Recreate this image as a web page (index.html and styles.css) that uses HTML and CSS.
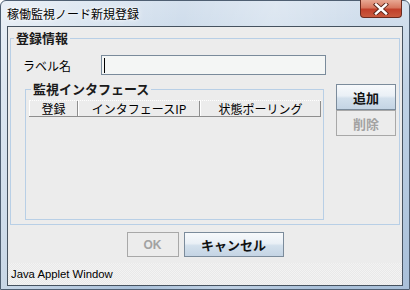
FILE: index.html
```html
<!DOCTYPE html>
<html lang="ja">
<head>
<meta charset="utf-8">
<title>稼働監視ノード新規登録</title>
<link rel="stylesheet" href="styles.css">
</head>
<body>
<div class="window">
  <div class="titlebar">
    <span class="title">稼働監視ノード新規登録</span>
    <div class="close">
      <svg width="16" height="12" viewBox="0 0 16 12">
        <path d="M3 1.5 L13 10.5 M13 1.5 L3 10.5" stroke="#5a2418" stroke-width="4.2" stroke-linecap="square"/>
        <path d="M3 1.5 L13 10.5 M13 1.5 L3 10.5" stroke="#ffffff" stroke-width="2.4" stroke-linecap="square"/>
      </svg>
    </div>
  </div>
  <div class="client">
    <fieldset class="group outer">
      <legend>登録情報</legend>
      <div class="label-row">
        <span class="label">ラベル名</span>
        <div class="textfield"><span class="caret"></span></div>
      </div>
      <div class="main-row">
        <fieldset class="group inner">
          <legend>監視インタフェース</legend>
          <div class="table-header">
            <div class="th c1">登録</div>
            <div class="th c2">インタフェースIP</div>
            <div class="th c3">状態ポーリング</div>
          </div>
        </fieldset>
        <div class="side-buttons">
          <button class="btn active">追加</button>
          <button class="btn disabled">削除</button>
        </div>
      </div>
    </fieldset>
    <div class="buttons">
      <button class="btn disabled ok">OK</button>
      <button class="btn active cancel">キャンセル</button>
    </div>
    <div class="status">Java Applet Window</div>
  </div>
</div>
</body>
</html>
```

FILE: styles.css
```css
html, body {
  margin: 0;
  padding: 0;
  width: 410px;
  height: 290px;
  overflow: hidden;
  background: #ffffff;
}

.window {
  box-sizing: border-box;
  width: 410px;
  height: 290px;
  border: 1px solid #4f5f72;
  border-radius: 6px 6px 0 0;
  background:
    linear-gradient(100deg, rgba(255,255,255,0.5) 0%, rgba(255,255,255,0) 40%, rgba(255,255,255,0.25) 60%, rgba(255,255,255,0) 80%),
    linear-gradient(180deg, #d5e1ee 0%, #c0d2e5 30%, #a9c0d9 100%);
  display: flex;
  flex-direction: column;
  font-family: "Noto Sans CJK JP", sans-serif;
}

.titlebar {
  height: 25px;
  flex: none;
  display: flex;
  justify-content: space-between;
  align-items: flex-start;
  padding-left: 6px;
}

.title {
  font-size: 12px;
  line-height: 25px;
  color: #000;
  text-shadow: 0 0 6px #ffffff, 0 0 3px #ffffff;
}

.close {
  width: 42px;
  height: 18px;
  margin-top: -1px;
  margin-right: 7px;
  box-sizing: border-box;
  border: 1px solid #6b2a1e;
  border-top: none;
  border-radius: 0 0 4px 4px;
  background: linear-gradient(180deg, #e8a893 0%, #d7775f 45%, #c1402a 55%, #c95a3e 100%);
  display: flex;
  align-items: center;
  justify-content: center;
}

.client {
  flex: 1;
  margin: 0 6px 3px 6px;
  border: 1px solid #46525f;
  background: #ececec;
  display: flex;
  flex-direction: column;
}

.group {
  margin: 0;
  padding: 0;
  border: 1px solid #b8cfe6;
  min-width: 0;
}

.group legend {
  padding: 0 2px;
  font-size: 13px;
  line-height: 14px;
  font-weight: bold;
  color: #1a1a1a;
}

.outer {
  box-sizing: border-box;
  width: 390px;
  height: 194px;
  margin: 4px 0 0 2px;
}

.outer > legend {
  margin-left: 3px;
}

.label-row {
  display: flex;
  align-items: center;
  margin: 10px 0 0 12px;
  height: 20px;
}

.label {
  width: 78px;
  font-size: 12px;
  color: #000;
}

.textfield {
  box-sizing: border-box;
  width: 225px;
  height: 20px;
  border: 1px solid #7a8b9b;
  background: #f4f6f5;
  display: flex;
  align-items: center;
  padding-left: 2px;
}

.caret {
  width: 1px;
  height: 15px;
  background: #000;
}

.main-row {
  display: flex;
  align-items: flex-start;
  margin-top: 7px;
  padding-left: 14px;
}

.inner {
  box-sizing: border-box;
  width: 299px;
  height: 138px;
  padding: 4px 2px 0 3px;
}

.inner > legend {
  margin-left: 2px;
}

.table-header {
  display: flex;
  height: 17px;
  box-sizing: border-box;
  border-top: 1px dotted #ffffff;
  border-bottom: 1px solid #8e8e8e;
  background: #ececec;
}

.th {
  box-sizing: border-box;
  border-left: 1px solid #ffffff;
  border-right: 1px solid #8e8e8e;
  font-size: 12px;
  line-height: 15px;
  text-align: center;
  color: #000;
}

.c1 { width: 49px; }
.c2 { width: 122px; }
.c3 { flex: 1; }

.side-buttons {
  display: flex;
  flex-direction: column;
  margin: 2px 0 0 12px;
}

.btn {
  box-sizing: border-box;
  width: 60px;
  height: 26px;
  margin: 0;
  padding: 0;
  font-family: "Noto Sans CJK JP", sans-serif;
  font-size: 13px;
  font-weight: bold;
  border-radius: 0;
}

.btn.active {
  border: 1px solid #7b8b9b;
  background: linear-gradient(180deg, #f7f9fb 0%, #eaf0f6 45%, #d3e0ec 55%, #c4d4e4 100%);
  color: #111;
}

.btn.disabled {
  border: 1px solid #a8a8a8;
  background: #ececec;
  color: #a2a2a2;
}

.buttons {
  display: flex;
  justify-content: center;
  gap: 5px;
  margin-top: 7px;
}

.btn.ok {
  width: 52px;
  height: 25px;
  font-family: "Liberation Sans", sans-serif;
  font-size: 12px;
}

.btn.cancel {
  width: 100px;
  height: 25px;
}

.status {
  margin-top: 6px;
  height: 22px;
  flex: none;
  padding-left: 3px;
  font-family: "Liberation Sans", sans-serif;
  font-size: 11.3px;
  line-height: 22px;
  color: #000;
  background: repeating-conic-gradient(#f3f3f3 0 25%, #e9e9e9 0 50%) 0 0 / 2px 2px;
}
```
